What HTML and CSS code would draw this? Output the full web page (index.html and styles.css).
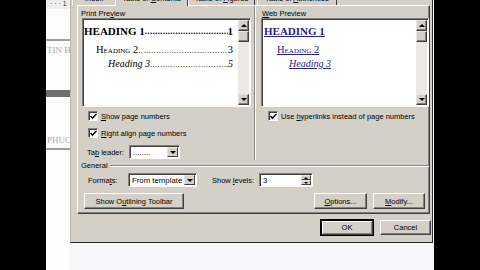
FILE: index.html
```html
<!DOCTYPE html>
<html lang="en">
<head>
    <meta charset="UTF-8">
    <title>Index and Tables</title>
    <link rel="stylesheet" href="styles.css">
</head>
<body>
    <div class="side"></div>

    <div class="screen">
        <!-- document behind the dialog -->
        <div class="doc">
            <div class="ruler">· · · 1</div>
            <div class="doc-rule"></div>
            <div class="doc-title">TIN H</div>
            <div class="doc-bar"></div>
            <div class="doc-title lower">PHUC</div>
            <div class="doc-rule low"></div>
        </div>

        <div class="dialog">
            <div class="tabs">
                <div class="tab first">Index</div>
                <div class="tab active">Table of <u>C</u>ontents</div>
                <div class="tab third">Table of <u>F</u>igures</div>
                <div class="tab fourth">Table of <u>A</u>uthorities</div>
            </div>

            <div class="panel">
                <div class="previews">
                    <div class="col">
                        <div class="group-label">Print Pre<u>v</u>iew</div>
                        <div class="preview">
                            <div class="preview-body">
                                <div class="toc-line lvl1"><span>HEADING 1</span><span class="dots">........................................................................</span><span>1</span></div>
                                <div class="toc-line lvl2"><span>Heading 2</span><span class="dots">........................................................................</span><span>3</span></div>
                                <div class="toc-line lvl3"><span>Heading 3</span><span class="dots">........................................................................</span><span>5</span></div>
                            </div>
                            <div class="scrollbar">
                                <div class="sb-btn"><span class="arrow up"></span></div>
                                <div class="sb-btn thumb"></div>
                                <div class="sb-track"></div>
                                <div class="sb-btn"><span class="arrow down"></span></div>
                            </div>
                        </div>

                        <div class="check first-check">
                            <span class="box"><svg width="7" height="7" viewBox="0 0 7 7"><polyline points="0.5,3 2.5,5.2 6.5,0.8" fill="none" stroke="#000" stroke-width="1.5"/></svg></span>
                            <span><u>S</u>how page numbers</span>
                        </div>
                        <div class="check second-check">
                            <span class="box"><svg width="7" height="7" viewBox="0 0 7 7"><polyline points="0.5,3 2.5,5.2 6.5,0.8" fill="none" stroke="#000" stroke-width="1.5"/></svg></span>
                            <span><u>R</u>ight align page numbers</span>
                        </div>
                        <div class="field leader-row">
                            <span class="field-label leader-label">Ta<u>b</u> leader:</span>
                            <div class="select leader">
                                <span class="select-text">........</span>
                                <span class="drop"><span class="arrow down"></span></span>
                            </div>
                        </div>
                    </div>

                    <div class="col right">
                        <div class="group-label"><u>W</u>eb Preview</div>
                        <div class="preview">
                            <div class="preview-body web">
                                <div class="toc-line lvl1"><span class="link">HEADING 1</span></div>
                                <div class="toc-line lvl2"><span class="link">Heading 2</span></div>
                                <div class="toc-line lvl3"><span class="link">Heading 3</span></div>
                            </div>
                            <div class="scrollbar">
                                <div class="sb-btn"><span class="arrow up"></span></div>
                                <div class="sb-btn thumb"></div>
                                <div class="sb-track"></div>
                                <div class="sb-btn"><span class="arrow down"></span></div>
                            </div>
                        </div>

                        <div class="check first-check">
                            <span class="box"><svg width="7" height="7" viewBox="0 0 7 7"><polyline points="0.5,3 2.5,5.2 6.5,0.8" fill="none" stroke="#000" stroke-width="1.5"/></svg></span>
                            <span>Use <u>h</u>yperlinks instead of page numbers</span>
                        </div>
                    </div>
                </div>

                <div class="general">
                    <span>General</span>
                    <span class="etch"></span>
                </div>

                <div class="field formats-row">
                    <span class="field-label formats-label">Forma<u>t</u>s:</span>
                    <div class="select formats">
                        <span class="select-text">From template</span>
                        <span class="drop"><span class="arrow down"></span></span>
                    </div>
                    <span class="field-label levels-label">Show <u>l</u>evels:</span>
                    <div class="select spinner">
                        <span class="select-text">3</span>
                        <span class="spin">
                            <span class="spin-btn"><span class="arrow up small"></span></span>
                            <span class="spin-btn"><span class="arrow down small"></span></span>
                        </span>
                    </div>
                </div>

                <div class="button-row">
                    <div class="btn outline">Show O<u>u</u>tlining Toolbar</div>
                    <div class="spacer"></div>
                    <div class="btn options"><u>O</u>ptions...</div>
                    <div class="btn modify"><u>M</u>odify...</div>
                </div>
            </div>

            <div class="footer">
                <div class="btn ok">OK</div>
                <div class="btn cancel">Cancel</div>
            </div>
        </div>
    </div>

    <div class="side right"></div>
</body>
</html>
```

FILE: styles.css
```css
* {
    margin: 0;
    padding: 0;
    box-sizing: border-box;
}

body {
    background-color: #000;
    display: flex;
    height: 270px;
    overflow: hidden;
    font-family: "Liberation Sans", Arial, sans-serif;
    font-size: 7.5px;
    color: #000;
}

.side {
    width: 46px;
    flex-shrink: 0;
}

.screen {
    width: 388px;
    height: 270px;
    flex-shrink: 0;
    display: flex;
    align-items: flex-start;
    background-color: #f7f7fa;
    overflow: hidden;
}

/* document strip */
.doc {
    width: 24px;
    height: 270px;
    flex-shrink: 0;
    overflow: hidden;
    background-color: #fcfcfd;
}

.ruler {
    height: 9px;
    line-height: 8px;
    padding-left: 4px;
    font-size: 7px;
    color: #333;
    background-color: #eeeeee;
    white-space: nowrap;
}

.doc-rule {
    height: 2px;
    margin-top: 30px;
    background-color: #9c9c9c;
}

.doc-rule.low {
    margin-top: 3px;
}

.doc-title {
    margin-top: 4px;
    padding-left: 1px;
    font-family: "Liberation Serif", serif;
    font-size: 9px;
    line-height: 10px;
    color: #a9a9a9;
    white-space: nowrap;
}

.doc-title.lower {
    margin-top: 38px;
}

.doc-bar {
    height: 7px;
    margin-top: 35px;
    background-color: #6f6f6f;
}

/* dialog */
.dialog {
    width: 363px;
    height: 257px;
    flex-shrink: 0;
    margin-top: -14px;
    padding: 0 1px;
    display: flex;
    flex-direction: column;
    background-color: #d4d0c8;
    border: 1px solid;
    border-color: #e6e4de #2a2a2a #2a2a2a #b8b6b0;
}

.tabs {
    height: 18px;
    display: flex;
    align-items: flex-end;
    white-space: nowrap;
}

.tab {
    height: 15px;
    padding-top: 3px;
    text-align: center;
    border: 1px solid;
    border-bottom: none;
    border-color: #fff #404040 #404040 #fff;
    overflow: hidden;
}

.tab.first { width: 44px; }
.tab.third { width: 67px; margin-left: 1px; }
.tab.fourth { width: 80px; margin-left: 2px; }

.tab.active {
    width: 73px;
    height: 17px;
    margin: 0 -1px -1px -1px;
    padding-top: 4px;
    background-color: #d4d0c8;
    position: relative;
    z-index: 1;
}

.panel {
    width: 353px;
    height: 209px;
    margin-left: 5px;
    border: 1px solid;
    border-color: #fff #404040 #404040 #fff;
    box-shadow: inset -1px -1px 0 #808080;
}

.previews {
    display: grid;
    grid-template-columns: 176px 175px;
}

.col {
    padding: 3px 0 1px 0;
}

.col.right {
    border-left: 1px solid #8a8882;
    box-shadow: inset 1px 0 0 #fff;
}

.group-label {
    height: 9px;
    line-height: 9px;
    padding-left: 3px;
}

.col.right .group-label {
    padding-left: 7px;
}

.preview {
    width: 169px;
    height: 89px;
    margin-left: 4px;
    display: flex;
    background-color: #fff;
    border: 1px solid;
    border-color: #808080 #fff #fff #808080;
    box-shadow: inset 1px 1px 0 #404040;
}

.col.right .preview {
    width: 168px;
    margin-left: 6px;
}

.preview-body {
    flex: 1;
    min-width: 0;
    padding: 6px 5px 0 1px;
    font-family: "Liberation Serif", serif;
    color: #000;
}

.toc-line {
    display: flex;
    height: 12px;
    line-height: 12px;
    white-space: nowrap;
}

.toc-line .dots {
    flex: 1;
    overflow: hidden;
    font-size: 9px;
    letter-spacing: 0.3px;
}

.lvl1 {
    font-size: 11px;
    font-weight: bold;
}

.lvl1 .dots {
    font-weight: bold;
}

.lvl2 {
    margin-top: 7px;
    padding-left: 12px;
    font-size: 10.5px;
    font-variant: small-caps;
}

.lvl3 {
    margin-top: 2px;
    padding-left: 24px;
    font-size: 10px;
    font-style: italic;
}

.web {
    padding-left: 2px;
}

.web .lvl2 { padding-left: 13px; }
.web .lvl3 { padding-left: 25px; }

.link {
    color: #22228a;
    text-decoration: underline;
}

/* scrollbars */
.scrollbar {
    width: 11px;
    margin: 1px 1px 1px 0;
    display: flex;
    flex-direction: column;
    background-color: #ebe9e4;
}

.sb-btn {
    height: 11px;
    display: flex;
    align-items: center;
    justify-content: center;
    background-color: #d4d0c8;
    border: 1px solid;
    border-color: #e8e6e0 #404040 #404040 #e8e6e0;
    box-shadow: inset -1px -1px 0 #808080;
}

.sb-track {
    flex: 1;
}

.arrow {
    width: 0;
    height: 0;
    border-left: 3px solid transparent;
    border-right: 3px solid transparent;
}

.arrow.up { border-bottom: 3px solid #000; }
.arrow.down { border-top: 3px solid #000; }

.arrow.small {
    border-left-width: 2px;
    border-right-width: 2px;
}

.arrow.up.small { border-bottom-width: 2px; }
.arrow.down.small { border-top-width: 2px; }

/* checkboxes */
.check {
    height: 10px;
    display: flex;
    align-items: center;
    gap: 3px;
    padding-left: 10px;
    white-space: nowrap;
}

.first-check { margin-top: 4px; }
.second-check { margin-top: 7px; }

.col.right .check {
    padding-left: 13px;
}

.box {
    width: 10px;
    height: 10px;
    display: flex;
    align-items: center;
    justify-content: center;
    background-color: #fff;
    border: 1px solid;
    border-color: #808080 #fff #fff #808080;
    box-shadow: inset 1px 1px 0 #404040;
}

/* fields */
.field {
    height: 14px;
    display: flex;
    align-items: center;
    white-space: nowrap;
}

.leader-row {
    margin-top: 7px;
    padding-left: 9px;
}

.leader-label { width: 42px; }

.select {
    height: 14px;
    display: flex;
    align-items: center;
    background-color: #fff;
    border: 1px solid;
    border-color: #808080 #fff #fff #808080;
    box-shadow: inset 1px 1px 0 #404040;
}

.select-text {
    flex: 1;
    padding-left: 3px;
    padding-top: 1px;
    font-size: 7.8px;
}

.drop {
    width: 11px;
    height: 10px;
    margin-right: 1px;
    display: flex;
    align-items: center;
    justify-content: center;
    background-color: #d4d0c8;
    border: 1px solid;
    border-color: #e8e6e0 #404040 #404040 #e8e6e0;
}

.leader { width: 51px; }

.general {
    height: 8px;
    margin-top: 2px;
    padding-left: 3px;
    display: flex;
    align-items: center;
    gap: 2px;
    line-height: 8px;
}

.etch {
    flex: 1;
    height: 2px;
    border-top: 1px solid #8a8882;
    border-bottom: 1px solid #fff;
}

.formats-row {
    margin-top: 3px;
    padding-left: 10px;
}

.formats-label { width: 40px; }

.formats { width: 69px; }

.levels-label {
    width: 47px;
    margin-left: 15px;
}

.spinner { width: 54px; }

.spin {
    width: 10px;
    height: 10px;
    margin-right: 1px;
    display: flex;
    flex-direction: column;
}

.spin-btn {
    flex: 1;
    display: flex;
    align-items: center;
    justify-content: center;
    background-color: #d4d0c8;
    border: 1px solid;
    border-color: #e8e6e0 #404040 #404040 #e8e6e0;
}

/* buttons */
.button-row {
    height: 16px;
    margin-top: 6px;
    padding: 0 4px 0 6px;
    display: flex;
    gap: 6px;
}

.spacer { flex: 1; }

.btn {
    height: 16px;
    display: flex;
    align-items: center;
    justify-content: center;
    white-space: nowrap;
    background-color: #d4d0c8;
    border: 1px solid;
    border-color: #fff #404040 #404040 #fff;
    box-shadow: inset -1px -1px 0 #808080;
}

.outline { width: 100px; }
.options { width: 53px; }
.modify { width: 52px; }

.footer {
    margin-top: 6px;
    display: flex;
    justify-content: flex-end;
    gap: 7px;
}

.footer .btn {
    height: 15px;
}

.ok {
    width: 52px;
    outline: 1px solid #000;
    outline-offset: 0;
    border-color: #000 #404040 #404040 #000;
    box-shadow: inset 1px 1px 0 #fff, inset -1px -1px 0 #808080;
}

.cancel { width: 51px; }
```
